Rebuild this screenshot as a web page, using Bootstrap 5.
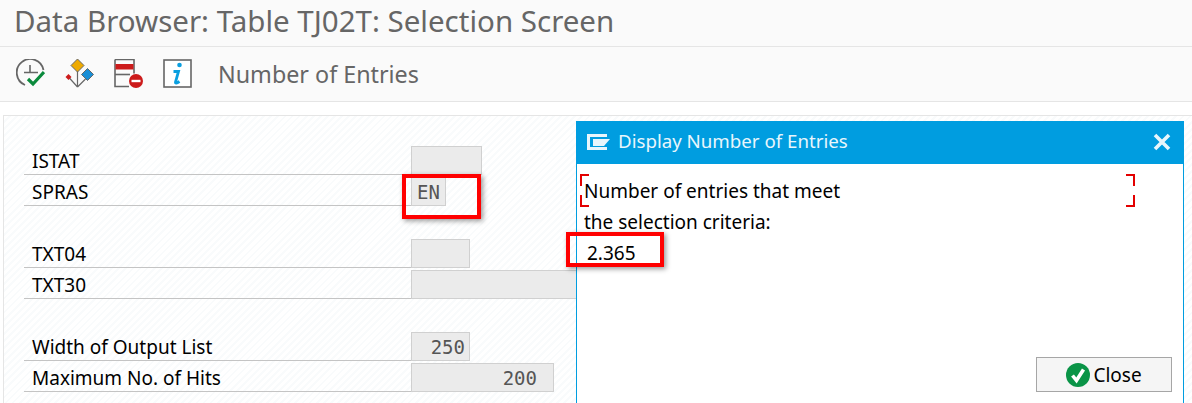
<!DOCTYPE html>
<html lang="en">
<head>
  <meta charset="UTF-8" />
  <title>Data Browser: Table TJ02T: Selection Screen</title>
  <link href="https://cdn.jsdelivr.net/npm/bootstrap@5.3.0/dist/css/bootstrap.min.css" rel="stylesheet" />
  <style>
    html, body { height: 403px; overflow: hidden; }
    body { font-family: "Noto Sans", sans-serif; background: #fff; color: #000; }
    .title-bar { height: 47px; background: #fafafa; border-bottom: 1px solid #e5e5e5; padding: 0 14px; font-size: 29.500px; line-height: 42px; color: #666; }
    .tool-bar { height: 55px; background: #fafafa; border-bottom: 1px solid #e5e5e5; padding-left: 16px; gap: 20px; color: #666; }
    .tool-bar svg { width: 29px; height: 30px; display: block; }
    .tool-label { margin-left: 6px; font-size: 23.300px; }
    .work-area { height: 301px; padding: 13px 0 0 3px; }
    .select-panel { height: 100%; border-top: 1px solid #e5e5e5; border-left: 1px solid #e5e5e5; padding: 28px 0 0 20px;
      background: repeating-linear-gradient(135deg, #fff 0 3px, #f9fbfc 3px 5px); }
    .field-row { height: 31px; width: 530px; font-size: 19px; }
    .field-gap { height: 31px; }
    .field-name { width: 387px; height: 31px; line-height: 35px; padding-left: 8px; border-bottom: 1px solid #c4c4c4; flex: none; }
    .field-box { height: 29px; background: #ebebeb; border: 1px solid #d0d0d0; font-family: "DejaVu Sans Mono", monospace; font-size: 19px; line-height: 28px; padding: 0 4px 0 5px; color: #555; flex: none; align-self: flex-end; }
    .box-w71 { width: 71px; }
    .box-w35 { width: 35px; }
    .box-w59 { width: 59px; }
    .box-wide { width: 170px; }
    .box-w143 { width: 143px; padding-right: 16px; }
    .sap-dialog { position: absolute; left: 576px; top: 121px; width: 608px; height: 290px; background: #fff; border: 1px solid #009de0; }
    .dialog-head { height: 42px; background: #009de0; color: #e8f6fc; font-size: 18.700px; padding: 0 12px 3px 10px; }
    .dialog-body { font-size: 19px; line-height: 31px; padding: 12px 0 0 7px; }
    .num-line { padding-left: 3px; }
    .crop-mark { position: absolute; width: 9px; height: 12px; border: 0 solid #e30000; }
    .mark-tl { left: 3px; top: 52px; border-top-width: 2px; border-left-width: 2px; }
    .mark-bl { left: 3px; top: 73px; border-bottom-width: 2px; border-left-width: 2px; }
    .mark-tr { left: 549px; top: 52px; border-top-width: 2px; border-right-width: 2px; }
    .mark-br { left: 549px; top: 73px; border-bottom-width: 2px; border-right-width: 2px; }
    .sap-btn { position: absolute; left: 459px; top: 235px; width: 136px; height: 35px; background: #f5f5f5; border: 1px solid #a6a6a6; font-size: 19px; gap: 3px; }
    .sap-btn span { position: relative; top: 1px; }
    .red-box { position: absolute; border: 4px solid #f00; box-shadow: 2px 2px 5px rgba(0,0,0,.4); }
    .box-en { left: 402px; top: 174px; width: 79px; height: 45px; }
    .box-num { left: 566px; top: 232px; width: 98px; height: 35px; }
  </style>
</head>
<body>
  <div class="title-bar">Data Browser: Table TJ02T: Selection Screen</div>

  <div class="tool-bar d-flex align-items-center">
    <!-- execute in background -->
    <svg viewBox="0 0 29 30" fill="none">
      <path d="M9 26 A13.500 13.500 0 1 1 27.500 11" stroke="#666" stroke-width="1.800" />
      <path d="M14 6v7.500M8 13.500h14" stroke="#666" stroke-width="1.600" />
      <path d="M12 20l5 5 11-12" stroke="#0a8a3c" stroke-width="3.200" />
    </svg>
    <!-- selection options -->
    <svg viewBox="0 0 29 30" fill="none">
      <path d="M12.500 28V12M12.500 28L3.500 18M12.500 28l8-8" stroke="#666" stroke-width="1.200" />
      <path d="M12.500 0l6.500 6.500-6.500 6.500L6 6.500z" fill="#eeaa00" stroke="#666" />
      <path d="M22.500 9.500l6 6-6 6-6-6z" fill="#1a8fd6" stroke="#666" />
      <path d="M3.500 15l3 3-3 3-3-3z" fill="#cc1b1b" />
    </svg>
    <!-- delete selection -->
    <svg viewBox="0 0 29 30" fill="none">
      <path d="M1 .500h19v14M1 .500v27h14" stroke="#666" stroke-width="1.600" />
      <path d="M1.500 5h18v5.500h-18z" fill="#cc1b1b" />
      <path d="M1 15.500h15" stroke="#666" stroke-width="1.600" />
      <circle cx="22" cy="22" r="7" fill="#cc1b1b" />
      <path d="M17.500 22h9" stroke="#fff" stroke-width="2.400" />
    </svg>
    <!-- information -->
    <svg viewBox="0 0 29 30" fill="none">
      <rect x="1" y="1" width="27" height="27" stroke="#666" stroke-width="1.600" fill="#fff" />
      <circle cx="16.500" cy="6" r="2.300" fill="#0a9fe0" />
      <path d="M10.500 12.500h5l-3 10.500c-.3 1.500 1 1.500 4-.5" stroke="#0a9fe0" stroke-width="2.800" />
    </svg>
    <span class="tool-label">Number of Entries</span>
  </div>

  <div class="work-area position-relative">
    <div class="select-panel">
      <div class="field-row d-flex"><div class="field-name">ISTAT</div><div class="field-box box-w71"></div></div>
      <div class="field-row d-flex"><div class="field-name">SPRAS</div><div class="field-box box-w35">EN</div></div>
      <div class="field-gap"></div>
      <div class="field-row d-flex"><div class="field-name">TXT04</div><div class="field-box box-w59"></div></div>
      <div class="field-row d-flex"><div class="field-name">TXT30</div><div class="field-box box-wide"></div></div>
      <div class="field-gap"></div>
      <div class="field-row d-flex"><div class="field-name">Width of Output List</div><div class="field-box box-w59 text-end">250</div></div>
      <div class="field-row d-flex"><div class="field-name">Maximum No. of Hits</div><div class="field-box box-w143 text-end">200</div></div>
    </div>
  </div>

  <div class="sap-dialog">
    <div class="dialog-head d-flex align-items-center">
      <svg width="23" height="16" viewBox="0 0 23 16" class="me-2" fill="#e8f6fc">
        <path d="M0 0h20v3H3v10h17v3H0z" />
        <path d="M6 5h17l-6 7H6z" />
      </svg>
      <span>Display Number of Entries</span>
      <svg width="18" height="18" viewBox="0 0 18 18" class="ms-auto" stroke="#e8f6fc" stroke-width="3.600">
        <path d="M2 2l14 14M16 2L2 16" />
      </svg>
    </div>
    <div class="dialog-body">
      <div>Number of entries that meet</div>
      <div>the selection criteria:</div>
      <div class="num-line">2.365</div>
    </div>
    <span class="crop-mark mark-tl"></span>
    <span class="crop-mark mark-bl"></span>
    <span class="crop-mark mark-tr"></span>
    <span class="crop-mark mark-br"></span>
    <div class="sap-btn d-flex align-items-center justify-content-center">
      <svg width="24" height="24" viewBox="0 0 24 24">
        <circle cx="12" cy="12" r="12" fill="#0a9447" />
        <path d="M6.500 12.500l4 5 7-11" stroke="#fff" stroke-width="3.600" fill="none" />
      </svg>
      <span>Close</span>
    </div>
  </div>

  <div class="red-box box-en"></div>
  <div class="red-box box-num"></div>
</body>
</html>
